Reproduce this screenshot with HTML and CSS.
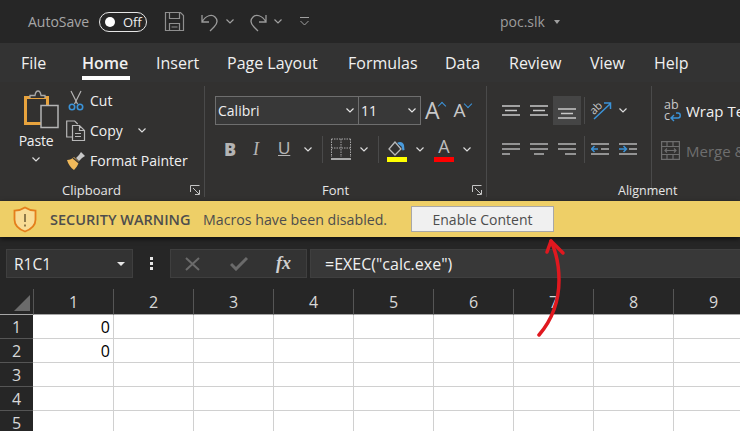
FILE: index.html
```html
<!DOCTYPE html>
<html>
<head>
  <title>poc.slk - Excel</title>
  <link rel="stylesheet" href="styles.css">
</head>
<body>
  <div class="titlebar">
    <span class="autosave">AutoSave</span>
    <span class="toggle"><i class="knob"></i>Off</span>
    <svg class="qa-save" width="21" height="21" viewBox="0 0 21 21" fill="none" stroke="#8f8f8f" stroke-width="1.2"><path d="M1.5 1.5h15l3 3v15h-18zM5.500 1.500v6h10v-6M5.500 19.500v-7h10v7M7.500 16h6"/></svg>
    <svg class="qa-undo" width="20" height="21" viewBox="0 0 20 21" fill="none" stroke="#9a9a9a" stroke-width="1.3"><path d="M2 4v7h7M2 11C6 4 12 3 15 6c4 4 1 8-1 10l-4 4"/></svg>
    <svg class="chev qa-c1" width="8" height="5" viewBox="0 0 8 5" fill="none" stroke="#a0a0a0" stroke-width="1.2"><path d="M.5.5 4 4 7.500.5"/></svg>
    <svg class="qa-redo" width="20" height="21" viewBox="0 0 20 21" fill="none" stroke="#9a9a9a" stroke-width="1.3"><path d="M18 4v7h-7M18 11C14 4 8 3 5 6c-4 4-1 8 1 10l4 4"/></svg>
    <svg class="chev qa-c2" width="8" height="5" viewBox="0 0 8 5" fill="none" stroke="#a0a0a0" stroke-width="1.2"><path d="M.5.5 4 4 7.500.5"/></svg>
    <svg class="qa-more" width="9" height="9" viewBox="0 0 9 9" fill="none" stroke="#a0a0a0" stroke-width="1"><path d="M0 .5h9M.5 4 4.500 8 8.500 4"/></svg>
    <span class="filename">poc.slk</span>
    <i class="caret caret-title"></i>
  </div>

  <div class="tabs">
    <span>File</span>
    <span class="tab-on">Home</span>
    <span>Insert</span>
    <span>Page Layout</span>
    <span>Formulas</span>
    <span>Data</span>
    <span>Review</span>
    <span>View</span>
    <span>Help</span>
  </div>

  <div class="ribbon">
    <section class="group group-clip">
      <div class="group-body">
        <div class="paste">
          <svg width="35" height="39" viewBox="0 0 35 39" fill="none">
            <path d="M1.500 7.500h22v26h-22z" stroke="#e8a33d" stroke-width="3"/>
            <path d="M6 8V5.500h5C11.500 2 12.500 1 14 1s2.500 1 3 4.500h4V8" stroke="#a8a8a8" stroke-width="1.300" fill="#323130"/>
            <path d="M17 15.500h17v22H17z" fill="#323130" stroke="#b4b4b4" stroke-width="1.500"/>
          </svg>
          <span class="paste-label">Paste</span>
          <svg class="chev" width="8" height="5" viewBox="0 0 8 5" fill="none" stroke="#dcdcdc" stroke-width="1.200"><path d="M.5.5 4 4 7.500.5"/></svg>
        </div>
        <div class="clip-rows">
          <div class="clip-row">
            <svg width="20" height="21" viewBox="0 0 20 21" fill="none"><path d="M5 1 11.500 14M15 1 8.500 14" stroke="#b4b4b4" stroke-width="1.200"/><circle cx="6" cy="17" r="2.700" stroke="#3b93d8" stroke-width="1.600"/><circle cx="14" cy="17" r="2.700" stroke="#3b93d8" stroke-width="1.600"/></svg>
            <span>Cut</span>
          </div>
          <div class="clip-row">
            <svg width="20" height="21" viewBox="0 0 20 21" fill="none" stroke="#b8b8b8" stroke-width="1.200"><path d="M6 17H.7V1h8l3 3"/><path d="M6.500 5.500h7l5 5v10h-12zM13.500 5.500v5h5M9 13.500h6M9 16.500h6"/></svg>
            <span>Copy</span>
            <svg class="chev copy-chev" width="8" height="5" viewBox="0 0 8 5" fill="none" stroke="#dcdcdc" stroke-width="1.200"><path d="M.5.5 4 4 7.500.5"/></svg>
          </div>
          <div class="clip-row">
            <svg width="20" height="20" viewBox="0 0 20 20" fill="none"><path d="M1 9c3 0 5-1 7-3l5 5c-1 3-3 6-5 8C5 17 2 13 1 9z" fill="#f0b95a"/><path d="M7 7l6 5" stroke="#323130" stroke-width="1.200"/><path d="M10 7l3-3 2-3 4 4-3 2-3 3z" fill="#c8c8c8"/></svg>
            <span>Format Painter</span>
          </div>
        </div>
      </div>
      <div class="group-foot foot-clip">Clipboard
        <svg class="launcher" width="10" height="10" viewBox="0 0 10 10" fill="none" stroke="#c4c4c4"><path d="M.5 7V.5H9.500M3 3l6 6M5 9.500h4.500V5"/></svg>
      </div>
    </section>

    <section class="group group-font">
      <div class="group-body font-body">
        <div class="font-top">
          <div class="combo combo-name"><span>Calibri</span><svg class="chev" width="8" height="5" viewBox="0 0 8 5" fill="none" stroke="#e6e6e6" stroke-width="1.200"><path d="M.5.5 4 4 7.500.5"/></svg></div>
          <div class="combo combo-size"><span>11</span><svg class="chev" width="8" height="5" viewBox="0 0 8 5" fill="none" stroke="#e6e6e6" stroke-width="1.200"><path d="M.5.5 4 4 7.500.5"/></svg></div>
          <span class="grow">A<i class="up"></i></span>
          <span class="shrink">A<i class="down"></i></span>
        </div>
        <div class="font-bottom">
          <b class="fmt fmt-b">B</b>
          <i class="fmt fmt-i">I</i>
          <u class="fmt fmt-u">U</u>
          <svg class="chev c-u" width="8" height="5" viewBox="0 0 8 5" fill="none" stroke="#dcdcdc" stroke-width="1.200"><path d="M.5.5 4 4 7.500.5"/></svg>
          <i class="vsep"></i>
          <svg class="borders" width="20" height="23" viewBox="0 0 20 23" fill="none" stroke="#a8a8a8" stroke-dasharray="1.500 1"><path d="M.5 1h19M.5 1v18M19.500 1v18M10 1v18M.5 10h19"/><path d="M0 21h20" stroke-width="2" stroke-dasharray="none"/></svg>
          <svg class="chev c-bd" width="8" height="5" viewBox="0 0 8 5" fill="none" stroke="#dcdcdc" stroke-width="1.200"><path d="M.5.5 4 4 7.500.5"/></svg>
          <i class="vsep"></i>
          <span class="swatch-btn">
            <svg width="18" height="15" viewBox="0 0 18 15" fill="none"><path d="M7 1 1 8l6 6 6-6z" stroke="#b8b8b8" stroke-width="1.300"/><path d="M9 2c3-2 6-1 7 2l.5 5-2 .5-1-4z" fill="#4a9bdc"/></svg>
            <i class="swatch swatch-y"></i>
          </span>
          <svg class="chev c-fill" width="8" height="5" viewBox="0 0 8 5" fill="none" stroke="#dcdcdc" stroke-width="1.200"><path d="M.5.5 4 4 7.500.5"/></svg>
          <span class="swatch-btn">
            <span class="color-a">A</span>
            <i class="swatch swatch-r"></i>
          </span>
          <svg class="chev c-col" width="8" height="5" viewBox="0 0 8 5" fill="none" stroke="#dcdcdc" stroke-width="1.200"><path d="M.5.5 4 4 7.500.5"/></svg>
        </div>
      </div>
      <div class="group-foot foot-font">Font
        <svg class="launcher" width="10" height="10" viewBox="0 0 10 10" fill="none" stroke="#c4c4c4"><path d="M.5 7V.5H9.500M3 3l6 6M5 9.500h4.500V5"/></svg>
      </div>
    </section>

    <section class="group group-align">
      <div class="group-body align-body">
        <div class="align-grid">
          <span class="al"><svg width="18" height="12" viewBox="0 0 18 12" stroke="#c8c8c8" stroke-width="1.300"><path d="M0 1h18M3 5.500h12M0 10h18"/></svg></span>
          <span class="al"><svg width="18" height="12" viewBox="0 0 18 12" stroke="#c8c8c8" stroke-width="1.300"><path d="M0 1h18M3 5.500h12M0 10h18"/></svg></span>
          <span class="al al-on"><svg class="al-low" width="18" height="12" viewBox="0 0 18 12" stroke="#c8c8c8" stroke-width="1.300"><path d="M0 1h18M3 5.500h12M0 10h18"/></svg></span>
          <i class="vsep vsep-al"></i>
          <span class="orient">
            <svg width="22" height="22" viewBox="0 0 22 22" fill="none"><path d="M4 19 20 4M14 3h6.500v6" stroke="#3b93d8" stroke-width="1.500"/><text x="0" y="12" class="orient-text" transform="rotate(-45 6 9)">ab</text></svg>
            <svg class="chev" width="8" height="5" viewBox="0 0 8 5" fill="none" stroke="#dcdcdc" stroke-width="1.200"><path d="M.5.5 4 4 7.500.5"/></svg>
          </span>
          <span class="al"><svg width="18" height="13" viewBox="0 0 18 13" stroke="#b4b4b4" stroke-width="1.500"><path d="M0 1h18M0 6h18M0 11h8"/></svg></span>
          <span class="al"><svg width="18" height="13" viewBox="0 0 18 13" stroke="#b4b4b4" stroke-width="1.500"><path d="M0 1h18M0 6h18M4 11h10"/></svg></span>
          <span class="al"><svg width="18" height="13" viewBox="0 0 18 13" stroke="#b4b4b4" stroke-width="1.500"><path d="M0 1h18M0 6h18M7 11h11"/></svg></span>
          <i class="vsep vsep-al"></i>
          <span class="indents">
            <svg width="18" height="13" viewBox="0 0 18 13" fill="none"><path d="M0 1h18M10 6h8M0 11h18" stroke="#b4b4b4" stroke-width="1.500"/><path d="M0 6h7M3.500 3 .5 6l3 3" stroke="#3b93d8" stroke-width="1.500"/></svg>
            <svg width="18" height="13" viewBox="0 0 18 13" fill="none"><path d="M0 1h18M10 6h8M0 11h18" stroke="#b4b4b4" stroke-width="1.500"/><path d="M0 6h7M4.500 3l3 3-3 3" stroke="#3b93d8" stroke-width="1.500"/></svg>
          </span>
        </div>
      </div>
      <div class="group-foot foot-align">Alignment</div>
    </section>

    <section class="group-wrap">
      <div class="wrap-row">
        <span class="wrap-icon">ab<br>c<svg width="11" height="10" viewBox="0 0 11 10" fill="none" stroke="#3b93d8" stroke-width="1.400"><path d="M6 1h2c3 0 3 5 0 5H1M4 3 1 6l3 3"/></svg></span>
        <span>Wrap Text</span>
      </div>
      <div class="wrap-row merge-row">
        <svg width="19" height="19" viewBox="0 0 19 19" fill="none" stroke="#6e6e6e" stroke-width="1.200"><path d="M.6.6h17.800v17.800H.6zM.6 5.500h17.800M.6 13.500h17.800M6 .6v5M12 .6v5M6 13.500v5M12 13.500v5M4 9.500h11M6 7.500l-2 2 2 2M13 7.500l2 2-2 2"/></svg>
        <span>Merge &amp; Center</span>
      </div>
    </section>
  </div>

  <div class="warnbar">
    <svg class="shield" width="24" height="27" viewBox="0 0 24 27" fill="#f8dc95" stroke="#e47e1b" stroke-width="1.800"><path d="M12 1.500c3 2 6 3 10.500 3.200v9c0 5-4 9.300-10.500 11.800C5.500 23 1.500 18.700 1.500 13.700v-9C6 4.500 9 3.500 12 1.500z"/><path d="M12 8v8M12 18.500v2" stroke="#6b5a33" stroke-width="1.500"/></svg>
    <span class="warn-title">SECURITY WARNING</span>
    <span class="warn-text">Macros have been disabled.</span>
    <span class="enable">Enable Content</span>
  </div>

  <div class="formulabar">
    <div class="namebox"><span>R1C1</span><i class="caret"></i></div>
    <div class="dots"><i></i><i></i><i></i></div>
    <div class="fx-box">
      <svg width="15" height="14" viewBox="0 0 15 14" fill="none" stroke="#6b6b6b" stroke-width="2"><path d="M1 1l13 12M14 1 1 13"/></svg>
      <svg width="18" height="15" viewBox="0 0 18 15" fill="none" stroke="#6b6b6b" stroke-width="3"><path d="M1 8l5 5L17 2"/></svg>
      <span class="fx">fx</span>
    </div>
    <div class="formula">=EXEC("calc.exe")</div>
  </div>

  <div class="sheet">
    <div class="corner"><i class="corner-tri"></i></div>
    <div class="colhead">1</div><div class="colhead">2</div><div class="colhead">3</div><div class="colhead">4</div><div class="colhead">5</div><div class="colhead">6</div><div class="colhead">7</div><div class="colhead">8</div><div class="colhead">9</div>

    <div class="rowhead">1</div><div class="cell">0</div><div class="cell"></div><div class="cell"></div><div class="cell"></div><div class="cell"></div><div class="cell"></div><div class="cell"></div><div class="cell"></div><div class="cell"></div>
    <div class="rowhead">2</div><div class="cell">0</div><div class="cell"></div><div class="cell"></div><div class="cell"></div><div class="cell"></div><div class="cell"></div><div class="cell"></div><div class="cell"></div><div class="cell"></div>
    <div class="rowhead">3</div><div class="cell"></div><div class="cell"></div><div class="cell"></div><div class="cell"></div><div class="cell"></div><div class="cell"></div><div class="cell"></div><div class="cell"></div><div class="cell"></div>
    <div class="rowhead">4</div><div class="cell"></div><div class="cell"></div><div class="cell"></div><div class="cell"></div><div class="cell"></div><div class="cell"></div><div class="cell"></div><div class="cell"></div><div class="cell"></div>
    <div class="rowhead">5</div><div class="cell"></div><div class="cell"></div><div class="cell"></div><div class="cell"></div><div class="cell"></div><div class="cell"></div><div class="cell"></div><div class="cell"></div><div class="cell"></div>
  </div>

  <svg class="arrow" width="740" height="431" viewBox="0 0 740 431" fill="none" stroke="#e0181f" stroke-width="3.500" stroke-linecap="round" stroke-linejoin="round">
    <path d="M539 335c12-14 20-32 20-55 0-15-3-28-8-39"/>
    <path d="M547 252l4-11 12 12"/>
  </svg>
</body>
</html>
```

FILE: styles.css
```css
html, body {
  margin: 0;
  padding: 0;
}

body {
  position: relative;
  width: 740px;
  height: 431px;
  overflow: hidden;
  background-color: #262626;
  color: #f0f0f0;
  font-family: "Open Sans", "Noto Sans", sans-serif;
  font-size: 14px;
}

svg {
  display: block;
  flex: none;
}

/* title bar */
.titlebar {
  display: flex;
  align-items: center;
  height: 43px;
  padding-left: 28px;
  background-color: #262626;
  color: #a6a6a6;
}

.autosave {
  width: 71px;
  font-size: 14px;
}

.toggle {
  display: flex;
  align-items: center;
  box-sizing: border-box;
  width: 48px;
  height: 20px;
  padding-left: 5px;
  border: 1px solid #e6e6e6;
  border-radius: 10px;
  color: #f0f0f0;
  font-size: 13px;
}

.knob {
  width: 10px;
  height: 10px;
  margin-right: 8px;
  border-radius: 50%;
  background-color: #fff;
}

.qa-save { margin-left: 17px; }
.qa-undo { margin-left: 15px; }
.qa-c1 { margin-left: 6px; }
.qa-redo { margin-left: 14px; }
.qa-c2 { margin-left: 6px; }
.qa-more { margin-left: 18px; }

.filename {
  margin-left: 191px;
  color: #9c9c9c;
  font-size: 14px;
}

.caret {
  width: 0;
  height: 0;
  border-top: 4px solid #e6e6e6;
  border-left: 4px solid transparent;
  border-right: 4px solid transparent;
}

.caret-title {
  margin-left: 9px;
  border-top-color: #a0a0a0;
  border-left-width: 3.500px;
  border-right-width: 3.500px;
}

/* tabs */
.tabs {
  display: grid;
  grid-template-columns: 61px 74px 71px 121px 97px 64px 81px 64px auto;
  align-items: center;
  height: 39px;
  padding-left: 21px;
  background-color: #333333;
  font-size: 16px;
}

.tabs span {
  white-space: nowrap;
}

.tabs .tab-on {
  font-weight: 600;
}

.tab-on::after {
  content: "";
  display: block;
  width: 48px;
  height: 4px;
  margin-top: 2px;
  margin-bottom: -6px;
  background-color: #fff;
}

/* ribbon */
.ribbon {
  display: flex;
  height: 119px;
  background-color: #323130;
  overflow: hidden;
  font-size: 14px;
}

.group {
  display: flex;
  flex: none;
  flex-direction: column;
  box-sizing: border-box;
  margin-top: 4px;
  height: 111px;
  border-right: 1px solid #4a4a4a;
}

.group-body {
  display: flex;
  height: 97px;
}

.group-foot {
  display: flex;
  align-items: center;
  height: 14px;
  padding-right: 4px;
  font-size: 13px;
  color: #e6e6e6;
}

.launcher {
  margin-left: auto;
}

.group-clip {
  width: 205px;
}

.paste {
  display: flex;
  flex-direction: column;
  align-items: center;
  width: 48px;
  margin-left: 12px;
  padding-top: 4px;
}

.paste svg:first-child {
  margin-left: 10px;
}

.paste-label {
  margin-top: 2px;
  font-size: 14px;
  letter-spacing: -0.2px;
}

.paste .chev {
  margin-top: 7px;
}

.clip-rows {
  display: flex;
  flex-direction: column;
  gap: 9px;
  margin-left: 6px;
  padding-top: 4px;
}

.clip-row {
  display: flex;
  align-items: center;
  gap: 4px;
  height: 21px;
  font-size: 14px;
  white-space: nowrap;
}

.copy-chev {
  margin-left: 11px;
}

.foot-clip {
  padding-left: 62px;
}

.group-font {
  width: 282px;
}

.font-body {
  flex-direction: column;
  padding: 10px 0 0 10px;
}

.foot-font {
  padding-left: 117px;
}

.font-top {
  display: flex;
  align-items: center;
  height: 29px;
}

.combo {
  display: flex;
  align-items: center;
  justify-content: space-between;
  box-sizing: border-box;
  height: 29px;
  padding: 0 4px 0 2px;
  background-color: #383838;
  border: 1px solid #6e6e6e;
  font-size: 14px;
}

.combo-name {
  width: 144px;
}

.combo-size {
  width: 63px;
  margin-left: -1px;
}

.grow, .shrink {
  display: flex;
  color: #c8c8c8;
  line-height: 1;
}

.grow {
  margin-left: 4px;
  font-size: 23px;
}

.shrink {
  margin-left: 9px;
  font-size: 19px;
}

.up, .down {
  width: 5px;
  height: 5px;
  margin-top: 4px;
  margin-left: -1px;
  border-top: 1.500px solid #3b93d8;
  border-left: 1.500px solid #3b93d8;
  transform: rotate(45deg);
}

.down {
  margin-top: 0;
  transform: rotate(225deg);
}

.font-bottom {
  display: flex;
  align-items: center;
  height: 26px;
  margin-top: 11px;
  padding-left: 9px;
}

.fmt {
  display: block;
  color: #b4b4b4;
  font-family: "Liberation Sans", sans-serif;
  font-size: 17px;
  text-align: center;
}

.fmt-b {
  width: 10px;
  font-family: "Open Sans", sans-serif;
  font-size: 18px;
  font-weight: 800;
}

.fmt-i {
  width: 10px;
  margin-left: 17px;
  font-family: "Liberation Serif", serif;
  font-size: 18px;
}

.fmt-u {
  width: 12px;
  margin-left: 17px;
}

.c-u { margin-left: 14px; }
.c-bd { margin-left: 9px; }
.c-fill { margin-left: 9px; }
.c-col { margin-left: 9px; }

.vsep {
  display: block;
  width: 1px;
  height: 27px;
  margin: 0 8px 0 10px;
  background-color: #4a4a4a;
}

.swatch-btn {
  display: flex;
  flex-direction: column;
  align-items: center;
  justify-content: flex-end;
  width: 20px;
  height: 26px;
}

.swatch-btn + .chev + .swatch-btn {
  margin-left: 10px;
}

.swatch {
  display: block;
  width: 20px;
  height: 5px;
  margin-top: 1px;
}

.swatch-y { background-color: #ffff00; }
.swatch-r { background-color: #ff0000; }

.color-a {
  color: #bdbdbd;
  font-size: 18px;
  line-height: 19px;
}

.group-align {
  width: 165px;
}

.align-body {
  flex-direction: column;
  padding: 10px 0 0 10px;
}

.align-grid {
  display: grid;
  grid-template-columns: 28px 28px 28px 5px auto;
  grid-template-rows: 29px 26px;
  row-gap: 11px;
  align-items: center;
}

.al {
  display: flex;
  align-items: center;
  justify-content: center;
  height: 29px;
}

.al-on {
  background-color: #454545;
}

.al-low {
  margin-top: 7px;
}

.vsep-al {
  margin: 0 0 0 3px;
}

.orient {
  display: flex;
  align-items: center;
  gap: 7px;
  margin-left: 4px;
}

.orient-text {
  fill: #c8c8c8;
  font-size: 11px;
}

.indents {
  display: flex;
  gap: 10px;
  margin-left: 5px;
}

.foot-align {
  padding-left: 131px;
  font-size: 12.500px;
  white-space: nowrap;
}

.group-wrap {
  display: flex;
  flex: none;
  flex-direction: column;
  gap: 15px;
  margin-top: 16px;
  padding-left: 12px;
  white-space: nowrap;
  font-size: 15px;
}

.wrap-row {
  display: flex;
  align-items: center;
  gap: 4px;
  height: 25px;
}

.wrap-icon {
  width: 18px;
  color: #c8c8c8;
  font-size: 12.500px;
  line-height: 11px;
}

.wrap-icon svg {
  display: inline-block;
  vertical-align: middle;
}

.merge-row {
  gap: 6px;
  margin-left: -3px;
  color: #6e6e6e;
}

/* security warning */
.warnbar {
  position: relative;
  display: flex;
  align-items: center;
  height: 36px;
  padding-left: 13px;
  background-color: #eecf67;
  color: #4d4d4d;
  box-shadow: 0 2px 5px rgba(0, 0, 0, 0.6);
}

.warn-title {
  width: 153px;
  margin-left: 13px;
  font-size: 14.500px;
  font-weight: 600;
  white-space: nowrap;
}

.warn-text {
  width: 208px;
  font-size: 14.200px;
  white-space: nowrap;
}

.enable {
  display: flex;
  align-items: center;
  justify-content: center;
  box-sizing: border-box;
  width: 143px;
  height: 26px;
  background-color: #f0f0f0;
  border: 1px solid #a8a8a8;
  font-size: 14px;
}

/* formula bar */
.formulabar {
  display: flex;
  align-items: stretch;
  height: 29px;
  padding: 12px 0 0 6px;
  background-color: #262626;
}

.namebox {
  display: flex;
  align-items: center;
  justify-content: space-between;
  box-sizing: border-box;
  width: 127px;
  padding: 0 7px;
  background-color: #333333;
  border: 1px solid #3f3f3f;
  font-size: 15.500px;
}

.dots {
  display: flex;
  flex-direction: column;
  align-items: center;
  justify-content: center;
  gap: 2px;
  width: 37px;
}

.dots i {
  width: 3px;
  height: 3px;
  background-color: #e6e6e6;
}

.fx-box {
  display: flex;
  align-items: center;
  box-sizing: border-box;
  gap: 30px;
  width: 137px;
  padding-left: 14px;
  background-color: #333333;
  border: 1px solid #3f3f3f;
}

.fx {
  margin-left: -2px;
  color: #d0d0d0;
  font-family: "Liberation Serif", serif;
  font-size: 18px;
  font-style: italic;
  font-weight: bold;
}

.formula {
  display: flex;
  align-items: center;
  flex: 1;
  margin-left: 3px;
  padding-left: 14px;
  background-color: #383838;
  border: 1px solid #3f3f3f;
  border-right: none;
  font-size: 16px;
}

/* sheet */
.sheet {
  display: grid;
  grid-template-columns: 33px repeat(9, 80px);
  grid-template-rows: 26px repeat(5, 24px);
  margin-top: 11px;
  background-color: #ffffff;
}

.corner, .colhead, .rowhead {
  display: flex;
  align-items: center;
  justify-content: center;
  box-sizing: border-box;
  background-color: #262626;
  color: #d8d8d8;
  font-size: 16px;
}

.corner {
  justify-content: flex-end;
  align-items: flex-end;
  padding: 0 3px 3px 0;
  border-bottom: 1px solid #a6a6a6;
}

.corner-tri {
  width: 0;
  height: 0;
  border-left: 16px solid transparent;
  border-bottom: 16px solid #6b6b6b;
}

.colhead {
  border-left: 1px solid #555555;
  border-bottom: 1px solid #a6a6a6;
}

.rowhead {
  border-bottom: 1px solid #555555;
}

.cell {
  box-sizing: border-box;
  padding: 1px 3px 0 0;
  color: #000;
  border-left: 1px solid #d0d0d0;
  border-bottom: 1px solid #d0d0d0;
  font-size: 16px;
  line-height: 22px;
  text-align: right;
}

.rowhead + .cell {
  border-left: none;
}

/* red annotation drawn on top of the shot */
.arrow {
  position: absolute;
  left: 0;
  top: 0;
  pointer-events: none;
}
```
